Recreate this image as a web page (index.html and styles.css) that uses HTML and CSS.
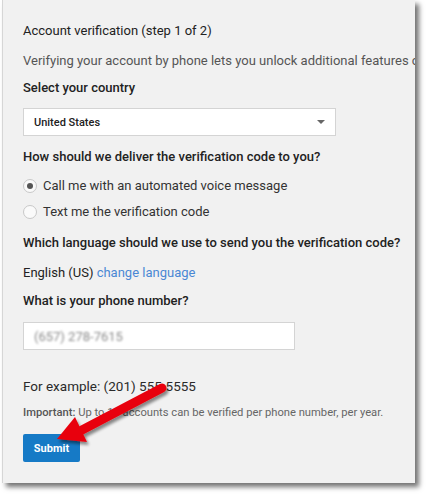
FILE: index.html
```html
<!DOCTYPE html>
<html>
<head>
<meta charset="utf-8">
<link rel="stylesheet" href="styles.css">
</head>
<body>
<div class="panel">
  <div class="content">
    <h1 class="title">Account verification (step 1 of 2)</h1>
    <p class="intro">Verifying your account by phone lets you unlock additional features on YouTube.</p>
    <h2 class="label label-country">Select your country</h2>
    <div class="select"><span>United States</span><span class="caret"></span></div>
    <h2 class="label">How should we deliver the verification code to you?</h2>
    <div class="radios">
      <div class="radio"><span class="dot checked"></span>Call me with an automated voice message</div>
      <div class="radio"><span class="dot"></span>Text me the verification code</div>
    </div>
    <h2 class="label label-lang">Which language should we use to send you the verification code?</h2>
    <p class="lang">English (US) <a class="link">change language</a></p>
    <h2 class="label label-phone">What is your phone number?</h2>
    <div class="input"><span class="blur">(657) 278-7615</span></div>
    <p class="example">For example: (201) 555-5555</p>
    <p class="important"><b>Important:</b> Up to 10 accounts can be verified per phone number, per year.</p>
    <button class="submit">Submit</button>
  </div>
</div>
<svg class="arrow" width="140" height="80" viewBox="0 0 140 80">
  <defs>
    <filter id="sh" x="-20%" y="-20%" width="150%" height="150%">
      <feGaussianBlur in="SourceAlpha" stdDeviation="1.5"/>
      <feOffset dx="2" dy="3" result="b"/>
      <feComponentTransfer><feFuncA type="linear" slope="0.45"/></feComponentTransfer>
      <feMerge><feMergeNode/><feMergeNode in="SourceGraphic"/></feMerge>
    </filter>
  </defs>
  <g filter="url(#sh)" fill="#e8000b">
    <line x1="132" y1="10" x2="52" y2="52" stroke="#e8000b" stroke-width="9" stroke-linecap="round"/>
    <polygon points="45,39 57,64 27,61"/>
  </g>
</svg>
</body>
</html>
```

FILE: styles.css
```css
html, body {
  margin: 0;
  padding: 0;
  background: #ffffff;
}
body {
  width: 430px;
  height: 498px;
  overflow: hidden;
  position: relative;
  font-family: Roboto, "Liberation Sans", sans-serif;
}
.panel {
  width: 412px;
  height: 483px;
  margin-left: 2px;
  background: #f1f1f1;
  border-left: 1px solid #d6d6d6;
  box-shadow: 4px 4px 5px rgba(0, 0, 0, 0.55);
  overflow: hidden;
}
.content {
  padding: 23px 0 0 20px;
  white-space: nowrap;
}
.title {
  margin: 0;
  font-size: 13px;
  font-weight: 400;
  color: #222;
  line-height: 16px;
}
.intro {
  margin: 14px 0 0;
  font-size: 13px;
  color: #555;
  line-height: 16px;
}
.label {
  margin: 13px 0 0;
  font-size: 13px;
  font-weight: 500;
  color: #222;
  line-height: 16px;
}
.label-country {
  margin-top: 11px;
}
.label-lang {
  margin-top: 15px;
}
.label-phone {
  margin-top: 12px;
}
.select {
  margin-top: 12px;
  height: 26px;
  background: #fff;
  border: 1px solid #d4d4d4;
  display: flex;
  align-items: center;
  justify-content: space-between;
  padding: 0 10px;
  box-sizing: content-box;
  width: 291px;
  font-size: 11px;
  font-weight: 500;
  color: #222;
}
.caret {
  width: 0;
  height: 0;
  border-left: 4px solid transparent;
  border-right: 4px solid transparent;
  border-top: 4px solid #666;
}
.radios {
  margin-top: 13px;
  display: flex;
  flex-direction: column;
  gap: 10px;
}
.radio {
  display: flex;
  align-items: center;
  gap: 6px;
  font-size: 13px;
  color: #333;
  line-height: 16px;
}
.dot {
  width: 12px;
  height: 12px;
  border: 1px solid #c8c8c8;
  border-radius: 50%;
  background: #fafafa;
  display: flex;
  align-items: center;
  justify-content: center;
}
.dot.checked::after {
  content: "";
  width: 6px;
  height: 6px;
  border-radius: 50%;
  background: #555;
}
.lang {
  margin: 14px 0 0;
  font-size: 13px;
  color: #222;
  line-height: 16px;
}
.link {
  color: #4a88d4;
}
.input {
  margin-top: 13px;
  width: 250px;
  height: 26px;
  padding: 0 10px;
  background: #fff;
  border: 1px solid #d4d4d4;
  display: flex;
  align-items: center;
}
.blur {
  font-size: 13px;
  color: #8a8a8a;
  filter: blur(1.2px);
}
.example {
  margin: 28px 0 0;
  font-size: 13.5px;
  color: #2a2a2a;
  line-height: 17px;
}
.important {
  margin: 11px 0 0;
  font-size: 11.2px;
  color: #666;
  line-height: 13px;
}
.important b {
  font-weight: 500;
  color: #555;
}
.submit {
  margin-top: 15px;
  width: 57px;
  height: 28px;
  border: none;
  border-radius: 2px;
  background: #167ac6;
  color: #fff;
  font-family: Roboto, "Liberation Sans", sans-serif;
  font-size: 11px;
  font-weight: 700;
  padding: 0;
}
.arrow {
  position: absolute;
  left: 30px;
  top: 378px;
}
```
